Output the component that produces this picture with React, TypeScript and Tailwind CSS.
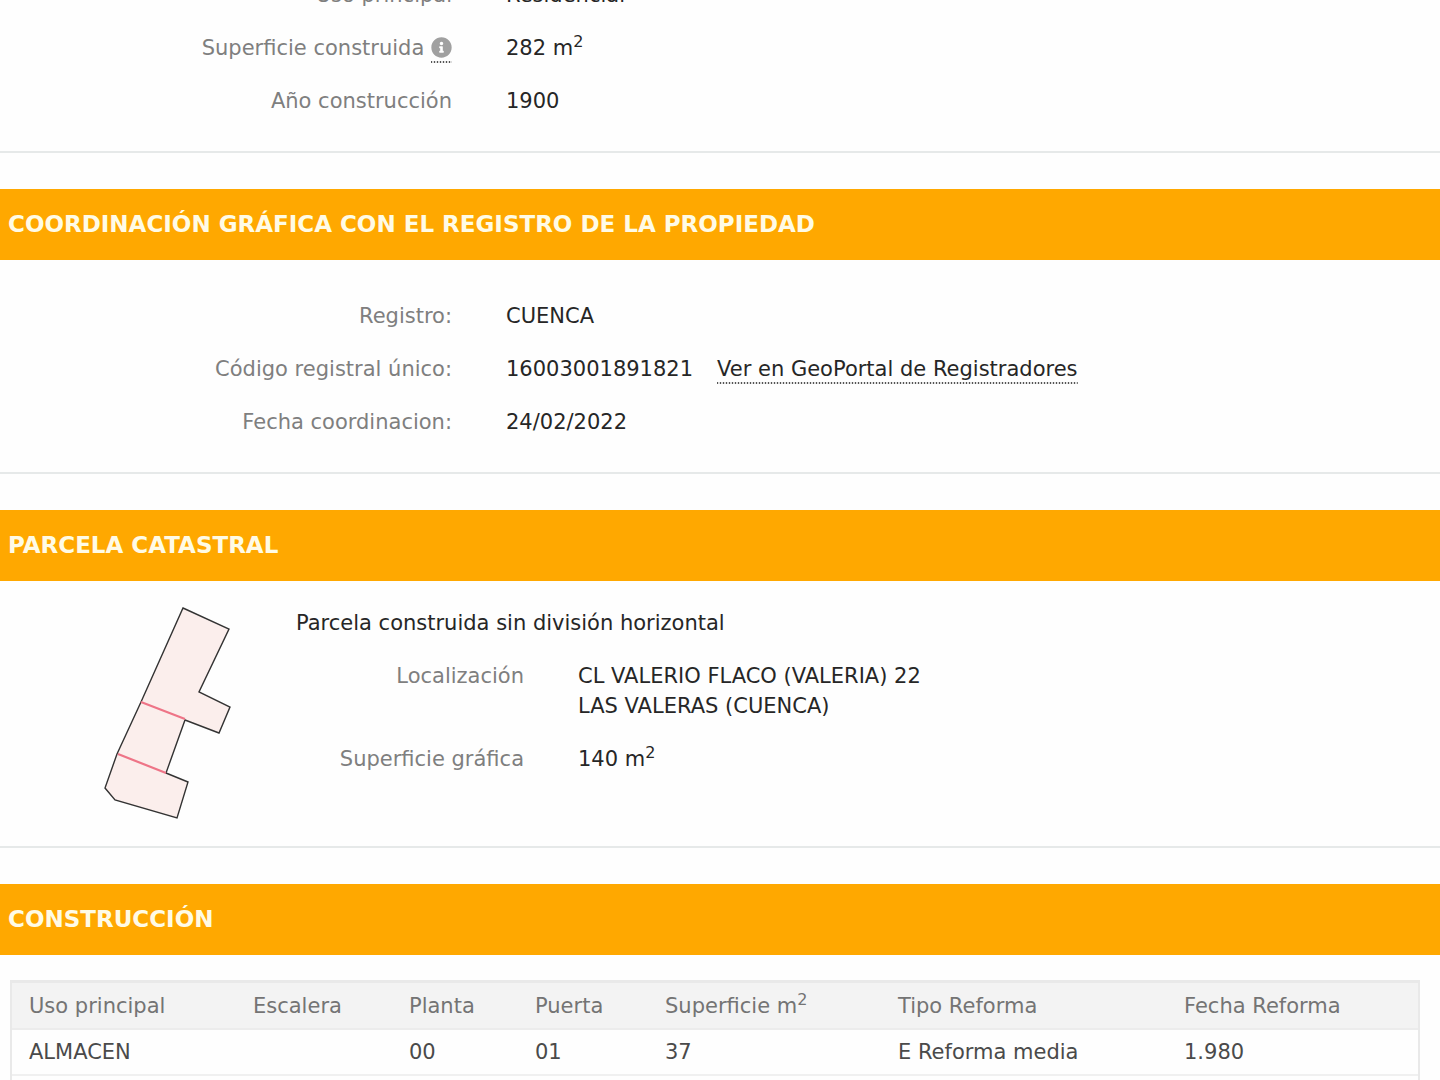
import React from 'react';
import { FaInfoCircle } from 'react-icons/fa';

interface Construction {
  use: string;
  stair: string;
  floor: string;
  door: string;
  area: string;
  reformType: string;
  reformDate: string;
}

const constructions: Construction[] = [
  {
    use: 'ALMACEN',
    stair: '',
    floor: '00',
    door: '01',
    area: '37',
    reformType: 'E Reforma media',
    reformDate: '1.980',
  },
];

const dotted =
  'bg-[repeating-linear-gradient(90deg,#555_0_1px,#ddd_1px_3px)] bg-[length:100%_2px] bg-bottom bg-no-repeat';

const SquareMeters: React.FC = () => (
  <>
    m<sup className="relative -top-2 text-[16px] leading-none align-baseline">2</sup>
  </>
);

const SectionTitle: React.FC<{ children: React.ReactNode }> = ({ children }) => (
  <h2 className="h-[71px] shrink-0 bg-[#ffa800] px-2 text-[23px] leading-[70px] font-bold text-[#fffbe6]">
    {children}
  </h2>
);

const Divider: React.FC = () => (
  <hr className="mt-[35px] mb-9 h-[2px] shrink-0 border-0 bg-[#e6e9e9]" />
);

const Field: React.FC<{ label: React.ReactNode; children: React.ReactNode }> = ({ label, children }) => (
  <>
    <dt className="text-right text-[#7f7f7f]">{label}</dt>
    <dd>{children}</dd>
  </>
);

const ParcelMap: React.FC = () => (
  <svg width="136" height="222" viewBox="100 602 136 222" role="img" aria-label="Croquis de la parcela">
    <path
      d="M183 608 L229 629 L199 692 L230 707 L219 733 L185 720 L166 773 L188 782 L177 818 L115 800 L105 788 L117 754 L141 702 Z"
      fill="#fbeeec"
      stroke="#333"
      strokeWidth="1.4"
    />
    <path d="M141 702 L185 719 M118 754 L166 773" fill="none" stroke="#ee7487" strokeWidth="2.2" />
  </svg>
);

const App: React.FC = () => {
  return (
    <main className="flex h-screen flex-col overflow-hidden bg-[#fefefe] font-['DejaVu_Sans',Verdana,sans-serif] text-[21px] leading-[30px] text-[#262626]">
      <dl className="-mt-5 grid shrink-0 grid-cols-[452px_1fr] gap-x-[54px] gap-y-[23px]">
        <Field label="Uso principal">Residencial</Field>
        <Field
          label={
            <>
              Superficie construida{' '}
              <a href="#superficie" aria-label="Información" className={`inline-block h-[30px] align-top ${dotted}`}>
                <FaInfoCircle className="mt-1 h-[21px] w-[21px] text-[#a0a0a0]" />
              </a>
            </>
          }
        >
          282 <SquareMeters />
        </Field>
        <Field label="Año construcción">1900</Field>
      </dl>
      <Divider />

      <SectionTitle>COORDINACIÓN GRÁFICA CON EL REGISTRO DE LA PROPIEDAD</SectionTitle>
      <dl className="mt-[41px] grid shrink-0 grid-cols-[452px_1fr] gap-x-[54px] gap-y-[23px]">
        <Field label="Registro:">CUENCA</Field>
        <Field label="Código registral único:">
          16003001891821
          <a href="#geoportal" className={`ml-6 inline-block ${dotted}`}>
            Ver en GeoPortal de Registradores
          </a>
        </Field>
        <Field label="Fecha coordinacion:">24/02/2022</Field>
      </dl>
      <Divider />

      <SectionTitle>PARCELA CATASTRAL</SectionTitle>
      <div className="flex shrink-0 gap-[60px] pt-[21px] pl-[100px]">
        <ParcelMap />
        <div className="flex-1 pt-1.5">
          <p>Parcela construida sin división horizontal</p>
          <dl className="mt-[23px] grid grid-cols-[228px_1fr] gap-x-[54px] gap-y-[23px]">
            <Field label="Localización">
              CL VALERIO FLACO (VALERIA) 22
              <br />
              LAS VALERAS (CUENCA)
            </Field>
            <Field label="Superficie gráfica">
              140 <SquareMeters />
            </Field>
          </dl>
        </div>
      </div>
      <hr className="mt-[22px] mb-9 h-[2px] shrink-0 border-0 bg-[#e6e9e9]" />

      <SectionTitle>CONSTRUCCIÓN</SectionTitle>
      <div className="mt-[25px] mr-5 ml-[10px] flex-1 border-x-2 border-t-3 border-[#e9e9e9]">
        <table className="w-full table-fixed border-collapse text-left">
          <colgroup>
            <col className="w-[224px]" />
            <col className="w-[156px]" />
            <col className="w-[126px]" />
            <col className="w-[130px]" />
            <col className="w-[233px]" />
            <col className="w-[286px]" />
            <col />
          </colgroup>
          <thead>
            <tr className="h-[46px] border-b-2 border-[#ececec] bg-[#f3f3f3] text-[#747474]">
              <th className="pl-[17px] font-normal">Uso principal</th>
              <th className="pl-[17px] font-normal">Escalera</th>
              <th className="pl-[17px] font-normal">Planta</th>
              <th className="pl-[17px] font-normal">Puerta</th>
              <th className="pl-[17px] font-normal">
                Superficie <SquareMeters />
              </th>
              <th className="pl-[17px] font-normal">Tipo Reforma</th>
              <th className="pl-[17px] font-normal">Fecha Reforma</th>
            </tr>
          </thead>
          <tbody>
            {constructions.map((item) => (
              <tr key={item.door} className="h-[46px] border-b-2 border-[#f0f0f0] text-[#4a4a4a]">
                <td className="pl-[17px]">{item.use}</td>
                <td className="pl-[17px]">{item.stair}</td>
                <td className="pl-[17px]">{item.floor}</td>
                <td className="pl-[17px]">{item.door}</td>
                <td className="pl-[17px]">{item.area}</td>
                <td className="pl-[17px]">{item.reformType}</td>
                <td className="pl-[17px]">{item.reformDate}</td>
              </tr>
            ))}
          </tbody>
        </table>
      </div>
    </main>
  );
};

export default App;
